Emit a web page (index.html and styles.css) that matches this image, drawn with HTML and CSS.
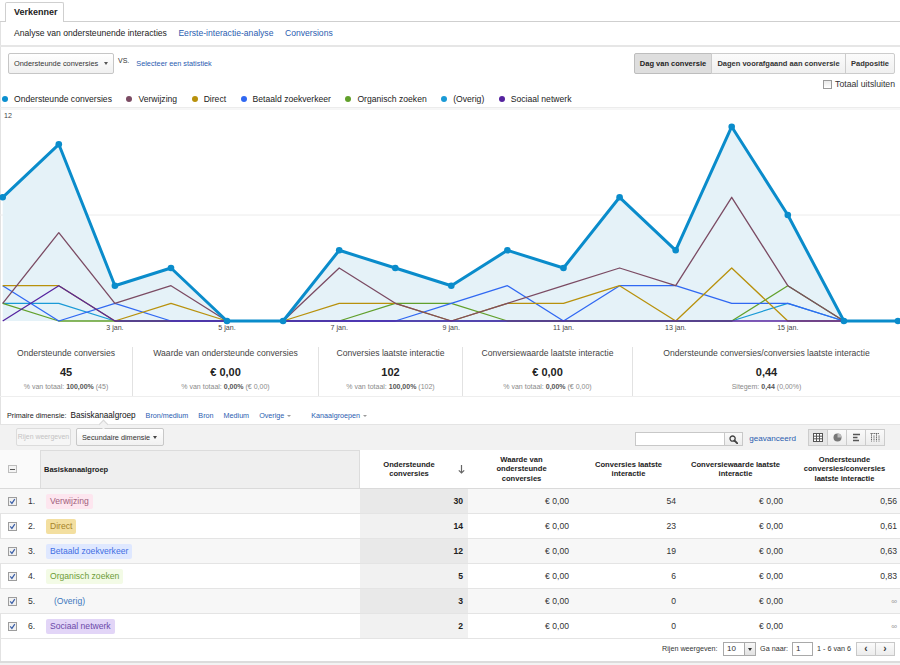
FILE: index.html
```html
<!DOCTYPE html>
<html lang="nl">
<head>
<meta charset="utf-8">
<title>Verkenner</title>
<link rel="stylesheet" href="styles.css">
</head>
<body>
<div class="tabs"><div class="tab">Verkenner</div></div>
<div class="main">
  <div class="subnav">
    <span class="cur">Analyse van ondersteunende interacties</span>
    <a href="#">Eerste-interactie-analyse</a>
    <a href="#">Conversions</a>
  </div>
  <div class="controls">
    <div class="left">
      <div class="dropdown">Ondersteunde conversies <span class="caret"></span></div>
      <span class="vs">VS.</span>
      <a href="#" class="pick">Selecteer een statistiek</a>
    </div>
    <div class="btngroup">
      <span class="b1 on">Dag van conversie</span>
      <span class="b2">Dagen voorafgaand aan conversie</span>
      <span class="b3">Padpositie</span>
    </div>
  </div>
  <div class="totaal"><span class="cb"></span>Totaal uitsluiten</div>
  <div class="legend">
    <span class="li"><i class="dot c-main"></i>Ondersteunde conversies</span>
    <span class="li"><i class="dot c-ver"></i>Verwijzing</span>
    <span class="li"><i class="dot c-dir"></i>Direct</span>
    <span class="li"><i class="dot c-bet"></i>Betaald zoekverkeer</span>
    <span class="li"><i class="dot c-org"></i>Organisch zoeken</span>
    <span class="li"><i class="dot c-ove"></i>(Overig)</span>
    <span class="li"><i class="dot c-soc"></i>Sociaal netwerk</span>
  </div>
  <svg class="chart" viewBox="0 0 900 232" width="900" height="232">
    <line x1="0" y1="1" x2="900" y2="1" stroke="#eeeeee" stroke-width="1"/>
    <line x1="0" y1="107" x2="900" y2="107" stroke="#ececec" stroke-width="1"/>
    <text x="4" y="10">12</text>
    <text x="4" y="116">6</text>
    <polygon fill="#e5f2f8" points="2.7,89.3 58.8,36.3 114.9,177.7 171,160 227,213 283.1,213 339.2,142.3 395.3,160 451.3,177.7 507.4,142.3 563.5,160 619.6,89.3 675.7,142.3 731.7,18.7 787.8,107 843.9,213 900,213 2.7,213"/>
    <polyline class="ln" stroke="#1a9ad6" points="2.7,195.3 58.8,195.3 114.9,213 731.7,213 787.8,195.3 843.9,213 900,213"/>
    <polyline class="ln" stroke="#61a02b" points="2.7,195.3 58.8,213 339.2,213 395.3,195.3 451.3,195.3 507.4,213 731.7,213 787.8,177.7 843.9,213 900,213"/>
    <polyline class="ln" stroke="#3068f2" points="2.7,177.7 58.8,213 114.9,195.3 171,213 395.3,213 451.3,195.3 507.4,177.7 563.5,213 619.6,177.7 675.7,177.7 731.7,195.3 787.8,195.3 843.9,213 900,213"/>
    <polyline class="ln" stroke="#b8910c" points="2.7,177.7 58.8,177.7 114.9,213 171,195.3 227,213 283.1,213 339.2,195.3 395.3,195.3 451.3,213 507.4,195.3 563.5,195.3 619.6,177.7 675.7,213 731.7,160 787.8,213 900,213"/>
    <polyline class="ln" stroke="#7b4b63" points="2.7,195.3 58.8,124.7 114.9,195.3 171,177.7 227,213 283.1,213 339.2,160 395.3,195.3 451.3,213 507.4,195.3 563.5,177.7 619.6,160 675.7,177.7 731.7,89.3 787.8,177.7 843.9,213 900,213"/>
    <polyline class="ln" stroke="#55239f" points="2.7,213 58.8,177.7 114.9,213 900,213"/>
    <polyline class="main-ln" points="2.7,89.3 58.8,36.3 114.9,177.7 171,160 227,213 283.1,213 339.2,142.3 395.3,160 451.3,177.7 507.4,142.3 563.5,160 619.6,89.3 675.7,142.3 731.7,18.7 787.8,107 843.9,213 900,213"/>
    <g class="pts">
      <circle cx="2.7" cy="89.3" r="3.3"/><circle cx="58.8" cy="36.3" r="3.3"/><circle cx="114.9" cy="177.7" r="3.3"/>
      <circle cx="171" cy="160" r="3.3"/><circle cx="227" cy="213" r="3.3"/><circle cx="283.1" cy="213" r="3.3"/>
      <circle cx="339.2" cy="142.3" r="3.3"/><circle cx="395.3" cy="160" r="3.3"/><circle cx="451.3" cy="177.7" r="3.3"/>
      <circle cx="507.4" cy="142.3" r="3.3"/><circle cx="563.5" cy="160" r="3.3"/><circle cx="619.6" cy="89.3" r="3.3"/>
      <circle cx="675.7" cy="142.3" r="3.3"/><circle cx="731.7" cy="18.7" r="3.3"/><circle cx="787.8" cy="107" r="3.3"/>
      <circle cx="843.9" cy="213" r="3.3"/><circle cx="898" cy="213" r="3.3"/>
    </g>
    <g class="xl">
      <text x="114.9" y="222">3 jan.</text>
      <text x="227" y="222">5 jan.</text>
      <text x="339.2" y="222">7 jan.</text>
      <text x="451.3" y="222">9 jan.</text>
      <text x="563.5" y="222">11 jan.</text>
      <text x="675.7" y="222">13 jan.</text>
      <text x="787.8" y="222">15 jan.</text>
    </g>
  </svg>
  <div class="stats">
    <div class="stat"><div class="st-t">Ondersteunde conversies</div><div class="st-v">45</div><div class="st-s">% van totaal: <b>100,00%</b> (45)</div></div>
    <div class="stat"><div class="st-t">Waarde van ondersteunde conversies</div><div class="st-v">€ 0,00</div><div class="st-s">% van totaal: <b>0,00%</b> (€ 0,00)</div></div>
    <div class="stat"><div class="st-t">Conversies laatste interactie</div><div class="st-v">102</div><div class="st-s">% van totaal: <b>100,00%</b> (102)</div></div>
    <div class="stat"><div class="st-t">Conversiewaarde laatste interactie</div><div class="st-v">€ 0,00</div><div class="st-s">% van totaal: <b>0,00%</b> (€ 0,00)</div></div>
    <div class="stat"><div class="st-t">Ondersteunde conversies/conversies laatste interactie</div><div class="st-v">0,44</div><div class="st-s">Sitegem: <b>0,44</b> (0,00%)</div></div>
  </div>
  <div class="dims">
    <span class="lbl">Primaire dimensie:</span>
    <span class="dcur">Basiskanaalgroep</span>
    <a href="#">Bron/medium</a>
    <a href="#">Bron</a>
    <a href="#">Medium</a>
    <a href="#">Overige <span class="sc"></span></a>
    <a href="#" class="kg">Kanaalgroepen <span class="sc"></span></a>
  </div>
  <div class="toolbar">
    <span class="notch"></span>
    <span class="btn-dis">Rijen weergeven</span>
    <span class="btn-sec">Secundaire dimensie <span class="caret"></span></span>
    <span class="search"><span class="sinput"></span><span class="sbtn"><svg width="9" height="9" viewBox="0 0 9 9"><circle cx="3.6" cy="3.6" r="2.6" fill="none" stroke="#444" stroke-width="1.3"/><path d="M5.5 5.5L8.3 8.3" stroke="#444" stroke-width="1.8" stroke-linecap="round"/></svg></span></span>
    <a href="#" class="adv">geavanceerd</a>
    <span class="views">
      <span class="v on"><svg width="10" height="9" viewBox="0 0 10 9"><rect x=".5" y=".5" width="9" height="8" fill="#fff" stroke="#555"/><path d="M3.5 .5v8M6.5 .5v8M.5 3.2h9M.5 5.8h9" stroke="#555" stroke-width="1"/></svg></span>
      <span class="v"><svg width="9" height="9" viewBox="0 0 9 9"><circle cx="4.5" cy="4.5" r="4" fill="#777"/><path d="M4.5 4.5V.5A4 4 0 0 1 8.5 4.5Z" fill="#bbb"/></svg></span>
      <span class="v"><svg width="9" height="9" viewBox="0 0 9 9"><path d="M1 1.5h7M1 4.5h4.5M1 7.5h6" stroke="#555" stroke-width="1.4"/></svg></span>
      <span class="v"><svg width="10" height="9" viewBox="0 0 10 9"><path d="M1.5 .5v8M4 2.5v6M6.5 .5v8M9 2.5v6M.5 .5h9" stroke="#666" stroke-width="1" stroke-dasharray="1.2 .6"/></svg></span>
    </span>
  </div>
  <div class="table">
    <div class="thead">
      <div class="th h0"><span class="minus"></span></div>
      <div class="th h1">Basiskanaalgroep</div>
      <div class="th h2"><span class="ht">Ondersteunde<br>conversies</span><svg class="arr" width="7" height="9" viewBox="0 0 7 9"><path d="M3.5 0V8M.8 5.3L3.5 8 6.2 5.3" fill="none" stroke="#666" stroke-width="1.2"/></svg></div>
      <div class="th">Waarde van<br>ondersteunde<br>conversies</div>
      <div class="th">Conversies laatste<br>interactie</div>
      <div class="th">Conversiewaarde laatste<br>interactie</div>
      <div class="th">Ondersteunde<br>conversies/conversies<br>laatste interactie</div>
    </div>
    <div class="row">
      <div class="c0"><svg class="ck" viewBox="0 0 9 9"><rect x=".5" y=".5" width="8" height="8" fill="#f1f1f1" stroke="#9d9d9d"/><path d="M2.2 4.4l1.7 2 2.9-4.2" fill="none" stroke="#3b5fa8" stroke-width="1.2"/></svg><span class="num">1.</span></div>
      <div class="c1"><span class="chip ch-ver">Verwijzing</span></div>
      <div class="c2">30</div><div class="cn">€ 0,00</div><div class="cn">54</div><div class="cn">€ 0,00</div><div class="cn last">0,56</div>
    </div>
    <div class="row">
      <div class="c0"><svg class="ck" viewBox="0 0 9 9"><rect x=".5" y=".5" width="8" height="8" fill="#f1f1f1" stroke="#9d9d9d"/><path d="M2.2 4.4l1.7 2 2.9-4.2" fill="none" stroke="#3b5fa8" stroke-width="1.2"/></svg><span class="num">2.</span></div>
      <div class="c1"><span class="chip ch-dir">Direct</span></div>
      <div class="c2">14</div><div class="cn">€ 0,00</div><div class="cn">23</div><div class="cn">€ 0,00</div><div class="cn last">0,61</div>
    </div>
    <div class="row">
      <div class="c0"><svg class="ck" viewBox="0 0 9 9"><rect x=".5" y=".5" width="8" height="8" fill="#f1f1f1" stroke="#9d9d9d"/><path d="M2.2 4.4l1.7 2 2.9-4.2" fill="none" stroke="#3b5fa8" stroke-width="1.2"/></svg><span class="num">3.</span></div>
      <div class="c1"><span class="chip ch-bet">Betaald zoekverkeer</span></div>
      <div class="c2">12</div><div class="cn">€ 0,00</div><div class="cn">19</div><div class="cn">€ 0,00</div><div class="cn last">0,63</div>
    </div>
    <div class="row">
      <div class="c0"><svg class="ck" viewBox="0 0 9 9"><rect x=".5" y=".5" width="8" height="8" fill="#f1f1f1" stroke="#9d9d9d"/><path d="M2.2 4.4l1.7 2 2.9-4.2" fill="none" stroke="#3b5fa8" stroke-width="1.2"/></svg><span class="num">4.</span></div>
      <div class="c1"><span class="chip ch-org">Organisch zoeken</span></div>
      <div class="c2">5</div><div class="cn">€ 0,00</div><div class="cn">6</div><div class="cn">€ 0,00</div><div class="cn last">0,83</div>
    </div>
    <div class="row">
      <div class="c0"><svg class="ck" viewBox="0 0 9 9"><rect x=".5" y=".5" width="8" height="8" fill="#f1f1f1" stroke="#9d9d9d"/><path d="M2.2 4.4l1.7 2 2.9-4.2" fill="none" stroke="#3b5fa8" stroke-width="1.2"/></svg><span class="num">5.</span></div>
      <div class="c1"><span class="chip ch-ove">(Overig)</span></div>
      <div class="c2">3</div><div class="cn">€ 0,00</div><div class="cn">0</div><div class="cn">€ 0,00</div><div class="cn last inf">∞</div>
    </div>
    <div class="row">
      <div class="c0"><svg class="ck" viewBox="0 0 9 9"><rect x=".5" y=".5" width="8" height="8" fill="#f1f1f1" stroke="#9d9d9d"/><path d="M2.2 4.4l1.7 2 2.9-4.2" fill="none" stroke="#3b5fa8" stroke-width="1.2"/></svg><span class="num">6.</span></div>
      <div class="c1"><span class="chip ch-soc">Sociaal netwerk</span></div>
      <div class="c2">2</div><div class="cn">€ 0,00</div><div class="cn">0</div><div class="cn">€ 0,00</div><div class="cn last inf">∞</div>
    </div>
  </div>
  <div class="pager">
    <span>Rijen weergeven:</span>
    <span class="sel10"><span class="sv">10</span><span class="sdd"><span class="caret"></span></span></span>
    <span class="goto">Ga naar:</span>
    <span class="gin">1</span>
    <span class="range">1 - 6 van 6</span>
    <span class="pbtns"><span class="pb">&lsaquo;</span><span class="pb">&rsaquo;</span></span>
  </div>
  <div class="foot"></div>
</div>
</body>
</html>
```
FILE: styles.css
```css
html { background: #fff; }
body {
  margin: 0;
  width: 900px;
  height: 665px;
  overflow: hidden;
  font-family: "Liberation Sans", Arial, sans-serif;
  color: #222;
}
a { color: #2a5db0; text-decoration: none; }

/* tabs */
.tabs {
  height: 21px;
  border-bottom: 1px solid #cfcfcf;
  padding-left: 5px;
  display: flex;
  align-items: flex-end;
}
.tab {
  box-sizing: border-box;
  width: 59px;
  height: 20px;
  line-height: 19px;
  margin-bottom: -1px;
  border: 1px solid #cfcfcf;
  border-bottom: 0;
  border-radius: 2px 2px 0 0;
  background: #fff;
  padding-left: 8px;
  font-weight: bold;
  font-size: 9px;
  color: #222;
}

.main { box-shadow: inset 1px 0 #e2e2e2; }

/* sub navigation */
.subnav {
  height: 23px;
  line-height: 23px;
  padding-left: 14px;
  font-size: 8.6px;
  border-bottom: 2px solid #e6e6e6;
  display: flex;
  gap: 11.5px;
}
.subnav .cur { color: #222; }

/* controls */
.controls {
  display: flex;
  justify-content: space-between;
  padding: 6px 5px 0 8px;
  height: 21px;
}
.left { display: flex; align-items: center; }
.dropdown {
  box-sizing: border-box;
  width: 106px;
  height: 21px;
  border: 1px solid #c6c6c6;
  border-radius: 2px;
  background: linear-gradient(#ffffff, #f0f0f0);
  font-size: 7.4px;
  color: #333;
  display: flex;
  align-items: center;
  padding-left: 5px;
}
.caret {
  display: inline-block;
  width: 0;
  height: 0;
  border-left: 2.5px solid transparent;
  border-right: 2.5px solid transparent;
  border-top: 3px solid #555;
}
.dropdown .caret { margin-left: auto; margin-right: 5px; }
.vs { font-size: 7px; color: #333; margin: 0 0 6px 4px; }
.pick { font-size: 7.3px; margin-left: 7px; }

.btngroup { display: flex; height: 21px; }
.btngroup span {
  box-sizing: border-box;
  height: 21px;
  line-height: 19px;
  border: 1px solid #cccccc;
  margin-left: -1px;
  font-weight: bold;
  font-size: 7.5px;
  text-align: center;
  color: #333;
  background: linear-gradient(#fbfbfb, #f0f0f0);
}
.btngroup .b1 { width: 78px; border-radius: 2px 0 0 2px; }
.btngroup .b2 { width: 135px; }
.btngroup .b3 { width: 50px; border-radius: 0 2px 2px 0; }
.btngroup .on { background: #dedede; border-color: #bdbdbd; color: #222; }

.totaal {
  display: flex;
  justify-content: flex-end;
  align-items: center;
  height: 12px;
  margin-top: 4px;
  padding-right: 5px;
  font-size: 8.7px;
  color: #333;
}
.cb {
  box-sizing: border-box;
  width: 9px;
  height: 9px;
  border: 1px solid #9a9a9a;
  background: linear-gradient(#e9e9e9, #ffffff);
  margin-right: 3px;
}

/* legend */
.legend {
  height: 17px;
  line-height: 16px;
  display: flex;
  gap: 14.5px;
  padding-left: 2px;
  font-size: 8.6px;
  color: #222;
  border-bottom: 1px solid #ececec;
}
.li { display: flex; align-items: center; }
.dot {
  width: 6px;
  height: 6px;
  border-radius: 50%;
  margin-right: 6px;
}
.c-main { background: #0b8fcf; }
.c-ver { background: #7b4b63; }
.c-dir { background: #b8910c; }
.c-bet { background: #3068f2; }
.c-org { background: #61a02b; }
.c-ove { background: #1a9ad6; }
.c-soc { background: #55239f; }

/* chart */
.chart { display: block; width: 900px; height: 232px; }
.chart text {
  font-family: "Liberation Sans", Arial, sans-serif;
  font-size: 7.1px;
  fill: #444;
}
.chart .xl text { text-anchor: middle; }
.chart .ln { fill: none; stroke-width: 1.3; stroke-linejoin: round; }
.chart .main-ln { fill: none; stroke: #0a8ccb; stroke-width: 3; stroke-linejoin: round; }
.chart .pts circle { fill: #0a8ccb; }

/* stats */
.stats {
  display: grid;
  grid-template-columns: 132px 186px 144px 170px 268px;
  margin-top: 7px;
  border-bottom: 1px solid #eeeeee;
}
.stat {
  box-sizing: border-box;
  height: 49px;
  text-align: center;
  border-left: 1px solid #e2e2e2;
}
.stat:first-child { border-left: 0; }
.st-t { font-size: 8.6px; line-height: 12px; color: #444; }
.st-v { font-size: 11px; font-weight: bold; line-height: 15px; margin-top: 6px; color: #222; }
.st-s { font-size: 7px; line-height: 9px; margin-top: 2px; color: #8a8a8a; }
.st-s b { color: #555; }

/* dimension row */
.dims {
  box-sizing: border-box;
  height: 27px;
  padding: 10px 0 0 7px;
  display: flex;
  align-items: center;
  font-size: 7.2px;
}
.dims .lbl { color: #222; }
.dims .dcur { font-size: 8.2px; color: #111; margin-left: 4px; }
.dims a { margin-left: 10px; display: flex; align-items: center; }
.dims a.kg { margin-left: 20px; }
.sc {
  display: inline-block;
  margin-left: 3px;
  border-left: 2px solid transparent;
  border-right: 2px solid transparent;
  border-top: 2.5px solid #9a9a9a;
}

/* toolbar */
.toolbar {
  position: relative;
  box-sizing: border-box;
  height: 26px;
  background: #f2f2f2;
  border-top: 1px solid #e4e4e4;
  display: flex;
  align-items: flex-end;
  padding: 0 15px 4px 16px;
}
.notch {
  position: absolute;
  left: 100px;
  top: -4.5px;
  width: 6px;
  height: 6px;
  background: #f2f2f2;
  border-left: 1px solid #d6d6d6;
  border-top: 1px solid #d6d6d6;
  transform: rotate(45deg);
}
.btn-dis {
  box-sizing: border-box;
  width: 55px;
  height: 18px;
  line-height: 16px;
  border: 1px solid #dcdcdc;
  border-radius: 2px;
  background: #f6f6f6;
  color: #c3c3c3;
  font-size: 6.9px;
  text-align: center;
  white-space: nowrap;
  overflow: hidden;
}
.btn-sec {
  box-sizing: border-box;
  margin-left: 5px;
  width: 88px;
  height: 18px;
  border: 1px solid #c8c8c8;
  border-radius: 2px;
  background: linear-gradient(#ffffff, #f1f1f1);
  font-size: 7.3px;
  color: #333;
  display: flex;
  align-items: center;
  padding-left: 5px;
  white-space: nowrap;
}
.btn-sec .caret { margin-left: auto; margin-right: 6px; border-top-color: #444; }
.search { margin-left: auto; display: flex; height: 14px; }
.sinput {
  box-sizing: border-box;
  width: 90px;
  height: 14px;
  background: #fff;
  border: 1px solid #c8c8c8;
}
.sbtn {
  box-sizing: border-box;
  width: 18px;
  height: 14px;
  border: 1px solid #c8c8c8;
  border-left: 0;
  background: linear-gradient(#fafafa, #ececec);
  display: flex;
  align-items: center;
  justify-content: center;
}
.adv { margin-left: 6px; font-size: 8.1px; line-height: 14px; }
.views { margin-left: 13px; display: flex; }
.v {
  box-sizing: border-box;
  width: 20px;
  height: 17px;
  margin-left: -1px;
  border: 1px solid #cccccc;
  background: linear-gradient(#fafafa, #ececec);
  display: flex;
  align-items: center;
  justify-content: center;
}
.v.on { background: #e6e6e6; }

/* table */
.thead, .row {
  display: grid;
  grid-template-columns: 40px 320px 108px 107px 107px 107px 111px;
}
.thead {
  box-sizing: border-box;
  height: 39px;
  border-bottom: 1px solid #dadada;
}
.th {
  display: flex;
  align-items: center;
  justify-content: center;
  text-align: center;
  font-weight: bold;
  font-size: 7.6px;
  line-height: 9.3px;
  color: #222;
}
.th.h0 { background: #fafafa; justify-content: flex-start; padding-left: 8px; }
.minus {
  box-sizing: border-box;
  width: 9px;
  height: 8px;
  border: 1px solid #bdbdbd;
  background: #f4f4f4;
  display: flex;
  align-items: center;
  justify-content: center;
}
.minus::after { content: ""; width: 5px; height: 1px; background: #555; }
.th.h1 {
  background: #efefef;
  border: 1px solid #dcdcdc;
  border-bottom: 0;
  justify-content: flex-start;
  padding-left: 3px;
  font-size: 7.5px;
}
.th.h2 { padding-right: 3px; }
.th.h2 .ht { flex: 1; }
.arr { flex: none; }

.row {
  box-sizing: border-box;
  height: 25px;
  border-bottom: 1px solid #e4e4e4;
  font-size: 8.6px;
  color: #333;
}
.row:nth-child(even) { background: #f7f7f7; }
.row > div { display: flex; align-items: center; }
.c0 { padding-left: 8px; }
.ck { width: 9px; height: 9px; }
.num { margin-left: 11px; color: #333; }
.c1 { padding-left: 6px; }
.chip {
  height: 15px;
  line-height: 15px;
  padding: 0 4px;
  border-radius: 2px;
}
.ch-ver { background: #fde6ef; color: #a0607c; }
.ch-dir { background: #f3dfa0; color: #a6832a; }
.ch-bet { background: #dfe8ff; color: #3f6fe3; }
.ch-org { background: #f3fbe6; color: #6c9b36; }
.ch-ove { color: #3d78bd; padding-left: 8px; }
.ch-soc { background: #e2d5f7; color: #6b4aa8; }
.c2 {
  justify-content: flex-end;
  padding-right: 5px;
  font-weight: bold;
  color: #222;
  background: #f1f1f1;
}
.row:nth-child(even) .c2 { background: #e9e9e9; }
.cn { justify-content: flex-end; padding-right: 6px; }
.cn.last { padding-right: 3px; }
.cn.inf { color: #999; font-size: 8px; }

/* pager */
.pager {
  box-sizing: border-box;
  height: 24px;
  border-bottom: 2px solid #dcdcdc;
  display: flex;
  justify-content: flex-end;
  align-items: flex-start;
  padding: 3px 5px 0 0;
  font-size: 7.2px;
  line-height: 14px;
  color: #333;
}
.sel10 {
  box-sizing: border-box;
  margin-left: 5.5px;
  width: 33px;
  height: 14px;
  border: 1px solid #a9a9a9;
  background: #fff;
  display: flex;
  font-size: 8px;
  line-height: 12px;
}
.sv { padding-left: 3px; }
.sdd {
  margin-left: auto;
  width: 10px;
  border-left: 1px solid #a9a9a9;
  background: linear-gradient(#f8f8f8, #e2e2e2);
  display: flex;
  align-items: center;
  justify-content: center;
}
.sdd .caret { border-top-color: #333; }
.goto { margin-left: 4px; }
.gin {
  box-sizing: border-box;
  margin-left: 4px;
  width: 21px;
  height: 14px;
  border: 1px solid #a9a9a9;
  background: #fff;
  padding-left: 3px;
  font-size: 8px;
  line-height: 12px;
}
.range { margin-left: 4px; }
.pbtns { margin-left: 6px; display: flex; }
.pb {
  box-sizing: border-box;
  width: 20px;
  height: 14px;
  margin-left: -1px;
  border: 1px solid #c8c8c8;
  background: linear-gradient(#fbfbfb, #ececec);
  text-align: center;
  font-weight: bold;
  font-size: 10px;
  line-height: 11px;
  color: #333;
}
.foot { height: 2px; background: #f3f3f3; }
```
